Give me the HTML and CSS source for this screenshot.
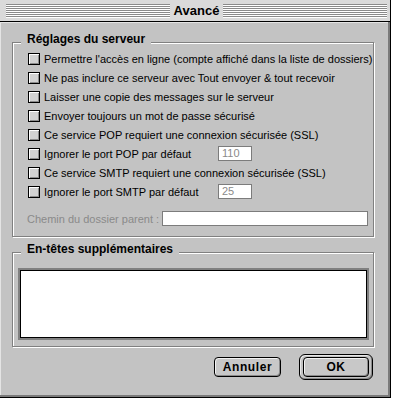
FILE: index.html
```html
<!doctype html>
<html lang="fr">

<head>
  <meta charset="UTF-8" />
  <meta name="viewport" content="width=device-width, initial-scale=1.0" />
  <title>Avancé</title>

  <link rel="stylesheet" href="styles.css">
</head>

<body>
  <div class="window">
    <div class="titlebar">
      <span class="stripes"></span>
      <span class="title">Avancé</span>
      <span class="stripes"></span>
    </div>

    <div class="content">
      <div class="group server">
        <span class="group-title">Réglages du serveur</span>
        <div class="options">
          <label class="row"><span class="check"></span><span>Permettre l'accès en ligne (compte affiché dans la liste de dossiers)</span></label>
          <label class="row"><span class="check"></span><span>Ne pas inclure ce serveur avec Tout envoyer &amp; tout recevoir</span></label>
          <label class="row"><span class="check"></span><span>Laisser une copie des messages sur le serveur</span></label>
          <label class="row"><span class="check"></span><span>Envoyer toujours un mot de passe sécurisé</span></label>
          <label class="row"><span class="check"></span><span>Ce service POP requiert une connexion sécurisée (SSL)</span></label>
          <label class="row"><span class="check"></span><span class="port-label">Ignorer le port POP par défaut</span><span class="field port">110</span></label>
          <label class="row"><span class="check"></span><span>Ce service SMTP requiert une connexion sécurisée (SSL)</span></label>
          <label class="row"><span class="check"></span><span class="port-label">Ignorer le port SMTP par défaut</span><span class="field port">25</span></label>
        </div>
        <div class="path-row">
          <span class="path-label">Chemin du dossier parent :</span>
          <span class="field path"></span>
        </div>
      </div>

      <div class="group headers">
        <span class="group-title">En-têtes supplémentaires</span>
        <div class="textbox"></div>
      </div>

      <div class="buttons">
        <button class="btn cancel">Annuler</button>
        <div class="default-ring">
          <button class="btn ok">OK</button>
        </div>
      </div>
    </div>
  </div>
</body>

</html>
```

FILE: styles.css
```css
body {
  margin: 0;
  background: #fff;
  font-family: "Liberation Sans", Arial, sans-serif;
}

.window {
  width: 390px;
  border-right: 1px solid #000;
  border-bottom: 1px solid #000;
}

.titlebar {
  height: 14px;
  display: flex;
  padding: 4px 3px 3px 6px;
  background: #dadada;
  border-bottom: 1px solid #000;
}

.stripes {
  flex: 1;
  background: repeating-linear-gradient(to bottom, #8a8a8a 0, #8a8a8a 1px, #fff 1px, #fff 2px);
}

.title {
  padding: 0 4px;
  font-size: 13px;
  font-weight: bold;
  line-height: 14px;
  color: #000;
}

.content {
  height: 353px;
  padding: 20px 14px 0 12px;
  background: #c3c3c3;
  border-right: 2px solid #7a7a7a;
  border-bottom: 2px solid #7a7a7a;
  box-shadow: inset 1px 1px 0 #e4e4e4;
}

.group {
  display: flex;
  flex-direction: column;
  align-items: flex-start;
  border: 1px solid #808080;
  box-shadow: inset 1px 1px 0 #fff, 1px 1px 0 #fff;
  padding: 0 5px 7px 8px;
}

.group-title {
  margin-top: -11px;
  padding: 0 6px;
  background: #c3c3c3;
  font-size: 12px;
  font-weight: bold;
  line-height: 14px;
  color: #000;
}

.options {
  margin-top: 3px;
  padding-left: 7px;
}

.row {
  height: 19px;
  display: flex;
  align-items: center;
  gap: 4px;
  font-size: 11px;
  white-space: nowrap;
  color: #000;
}

.check {
  flex: none;
  width: 10px;
  height: 10px;
  border: 1px solid #000;
  background: #d2d2d2;
  box-shadow: inset 1px 1px 0 #fff, inset -1px -1px 0 #8c8c8c;
}

.port-label {
  width: 170px;
}

.field {
  box-sizing: border-box;
  height: 15px;
  border: 1px solid #7c7c7c;
  background: #fff;
  font-size: 11px;
  line-height: 13px;
  color: #8a8a8a;
  padding-left: 3px;
}

.field.port {
  width: 34px;
}

.path-row {
  align-self: stretch;
  height: 21px;
  margin-top: 7px;
  display: flex;
  align-items: center;
}

.path-label {
  width: 135px;
  margin-left: 6px;
  font-size: 11px;
  white-space: nowrap;
  color: #8a8a8a;
}

.field.path {
  flex: 1;
}

.headers {
  margin-top: 15px;
  padding-bottom: 8px;
}

.textbox {
  box-sizing: border-box;
  width: 347px;
  height: 68px;
  margin: 14px 0 0 -1px;
  background: #fff;
  border: 1px solid #000;
  box-shadow: 0 0 0 2px #808080;
}

.buttons {
  margin-top: 7px;
  padding-right: 1px;
  display: flex;
  align-items: center;
  justify-content: flex-end;
  gap: 18px;
}

.btn {
  height: 20px;
  padding: 0;
  border: 1px solid #000;
  border-radius: 4px;
  background: #c8c8c8;
  box-shadow: inset 1px 1px 0 #f2f2f2, inset -1px -1px 0 #8a8a8a;
  font-family: "Liberation Sans", Arial, sans-serif;
  font-size: 12px;
  font-weight: bold;
  letter-spacing: 0.6px;
  color: #000;
}

.cancel {
  width: 67px;
}

.ok {
  width: 66px;
}

.default-ring {
  display: flex;
  padding: 2px 3px;
  border: 1px solid #000;
  border-radius: 6px;
  background: #c3c3c3;
  box-shadow: inset 1px 1px 0 #e8e8e8, inset -1px -1px 0 #8a8a8a;
}
```
